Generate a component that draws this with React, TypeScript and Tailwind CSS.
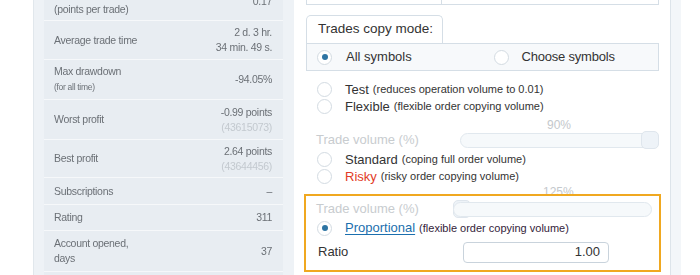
import React from 'react';

const STATS: { label: React.ReactNode; value: React.ReactNode; h: string }[] = [
  {
    label: (
      <>
        Average profit
        <br />
        (points per trade)
      </>
    ),
    value: '0.17',
    h: 'h-[38px]',
  },
  {
    label: 'Average trade time',
    value: (
      <>
        2 d. 3 hr.
        <br />
        34 min. 49 s.
      </>
    ),
    h: 'h-[39px]',
  },
  {
    label: (
      <>
        Max drawdown
        <br />
        <span className="text-[8.5px]">(for all time)</span>
      </>
    ),
    value: '-94.05%',
    h: 'h-[40px]',
  },
  {
    label: 'Worst profit',
    value: (
      <>
        -0.99 points
        <br />
        <span className="text-[#c3c9cf]">(43615073)</span>
      </>
    ),
    h: 'h-[40px]',
  },
  {
    label: 'Best profit',
    value: (
      <>
        2.64 points
        <br />
        <span className="text-[#c3c9cf]">(43644456)</span>
      </>
    ),
    h: 'h-[38px]',
  },
  { label: 'Subscriptions', value: '–', h: 'h-[27px]' },
  { label: 'Rating', value: '311', h: 'h-[26px]' },
  {
    label: (
      <>
        Account opened,
        <br />
        days
      </>
    ),
    value: '37',
    h: 'h-[41px]',
  },
  { label: '', value: '', h: 'h-[26px]' },
];

function Radio({ checked }: { checked?: boolean }) {
  return (
    <span className="flex h-[15px] w-[15px] shrink-0 items-center justify-center rounded-full border border-[#d3dbe2] bg-white">
      {checked && <span className="h-[6px] w-[6px] rounded-full bg-[#2d74a3]" />}
    </span>
  );
}

function Slider({ width, thumbAt }: { width: string; thumbAt: 'left' | 'right' }) {
  return (
    <div className={`flex h-[18px] items-center ${width}`}>
      {thumbAt === 'left' && (
        <span className="h-[18px] w-[18px] shrink-0 rounded-[5px] border border-[#dfe6ed] bg-[#eef3f8]" />
      )}
      <span
        className={`h-[15px] flex-1 border border-[#e1e8ee] bg-[#f6f9fb] ${
          thumbAt === 'left' ? '-ml-[18px] rounded-[8px]' : 'rounded-l-[8px]'
        }`}
      />
      {thumbAt === 'right' && (
        <span className="-ml-[8px] h-[18px] w-[18px] shrink-0 rounded-[5px] border border-[#dfe6ed] bg-[#eef3f8]" />
      )}
    </div>
  );
}

function ModeOption({
  title,
  note,
  titleClass = 'text-[#333]',
}: {
  title: string;
  note: string;
  titleClass?: string;
}) {
  return (
    <div className="flex h-[17px] items-center pl-[11px]">
      <Radio />
      <span className={`ml-[13px] text-[13px] ${titleClass}`}>{title}</span>
      <span className="ml-[4px] text-[11px] text-[#333]">{note}</span>
    </div>
  );
}

export default function App() {
  return (
    <div
      className="flex h-[275px] w-[700px] overflow-hidden bg-white"
      style={{ fontFamily: '"Liberation Sans", Arial, sans-serif' }}
    >
      <div className="w-[33px] shrink-0" />

      {/* stats panel (behind, blurred) */}
      <div className="w-[261px] shrink-0 border-l border-[#e1e7ec] bg-[#eef2f6] pl-[10px] pr-[11px] blur-[0.6px]">
        <div className="-mt-[17px] divide-y divide-[#f6f8fa] bg-[#e8edf2] text-[10.5px] leading-[15px] tracking-[-0.3px] text-[#6b7076]">
          {STATS.map((row, i) => (
            <div key={i} className={`flex items-center justify-between pl-[10px] pr-[11px] ${row.h}`}>
              <div>{row.label}</div>
              <div className="text-right">{row.value}</div>
            </div>
          ))}
        </div>
      </div>

      {/* copy settings */}
      <div className="w-[376px] shrink-0 pl-[12px] pr-[11px]">
        <div className="flex h-[5px] border-x border-b border-[#d5dee6]">
          <div className="w-[135px] border-r border-[#d5dee6]" />
        </div>

        <div className="mt-[10px] flex h-[28px] w-[137px] items-center rounded-t-[5px] border-x border-t border-[#d5dee6] pl-[11px] text-[13.5px] text-[#333]">
          Trades copy mode:
        </div>
        <div className="grid h-[28px] grid-cols-2 border border-[#d5dee6] bg-[#f7f9fb] text-[13px] text-[#333]">
          <div className="flex items-center pl-[10px]">
            <Radio checked />
            <span className="ml-[14px]">All symbols</span>
          </div>
          <div className="flex items-center pl-[11px]">
            <Radio />
            <span className="ml-[13px] tracking-[-0.2px]">Choose symbols</span>
          </div>
        </div>

        <div className="mt-[10px]">
          <ModeOption title="Test" note="(reduces operation volume to 0.01)" />
          <ModeOption title="Flexible" note="(flexible order copying volume)" />
        </div>

        <div className="mt-[3px] h-[12px] pl-[241px] text-[12px] leading-[15px] text-[#c4c8cc]">90%</div>
        <div className="flex h-[20px] items-center pl-[10px]">
          <span className="w-[145px] text-[13px] text-[#c8cccf]">Trade volume (%)</span>
          <Slider width="w-[200px]" thumbAt="right" />
        </div>

        <div className="mt-[1px]">
          <ModeOption title="Standard" note="(coping full order volume)" />
          <ModeOption title="Risky" note="(risky order copying volume)" titleClass="text-[#e23b26]" />
        </div>

        <div className="h-[9px] pl-[237px] text-[12px] leading-[15px] text-[#c4c8cc]">125%</div>
        <div className="relative -ml-[2px] w-[357px] border-2 border-[#f0a820] bg-white">
          <div className="flex h-[22px] items-center pl-[10px] pt-[4px]">
            <span className="w-[137px] text-[13px] text-[#c8cccf]">Trade volume (%)</span>
            <Slider width="w-[199px]" thumbAt="left" />
          </div>
          <div className="flex h-[20px] items-center pl-[11px]">
            <Radio checked />
            <span className="ml-[13px] text-[13px] text-[#1b6fae] underline underline-offset-2">Proportional</span>
            <span className="ml-[4px] text-[11px] text-[#33233a]">(flexible order copying volume)</span>
          </div>
          <div className="flex h-[32px] items-center pb-[4px] pl-[12px]">
            <span className="w-[145px] text-[13px] text-[#333]">Ratio</span>
            <div className="flex h-[21px] w-[146px] items-center justify-end rounded-[4px] border border-[#c9d3dc] bg-white pr-[8px] text-[13px] text-[#333]">
              1.00
            </div>
          </div>
        </div>
      </div>

      <div className="w-[11px] shrink-0 border-l border-[#dde4ea] bg-[#f3f6f9]" />
      <div className="flex-1" />
    </div>
  );
}
